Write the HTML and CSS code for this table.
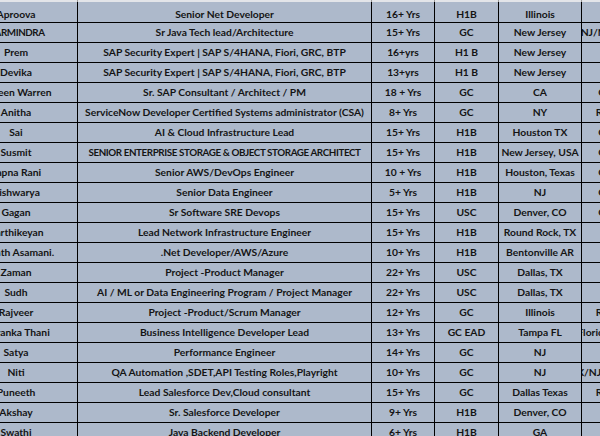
FILE: index.html
```html
<!DOCTYPE html>
<html lang="en">
<head>
<meta charset="utf-8">
<title>Candidates</title>
<link rel="stylesheet" href="styles.css">
</head>
<body>
<div class="sheet">
  <div class="row strip"><div></div><div></div><div></div><div></div><div></div><div></div></div>
  <div class="row first"><div>Aproova</div><div>Senior Net Developer</div><div>16+ Yrs</div><div>H1B</div><div>Illinois</div><div></div></div>
  <div class="row"><div class="caps">HARMINDRA</div><div>Sr Java Tech lead/Architecture</div><div>15+ Yrs</div><div>GC</div><div>New Jersey</div><div>NJ/NY/CT/PA</div></div>
  <div class="row"><div>Prem</div><div>SAP Security Expert | SAP S/4HANA, Fiori, GRC, BTP</div><div>16+yrs</div><div>H1 B</div><div>New Jersey</div><div></div></div>
  <div class="row"><div>Devika</div><div>SAP Security Expert | SAP S/4HANA, Fiori, GRC, BTP</div><div>13+yrs</div><div>H1 B</div><div>New Jersey</div><div></div></div>
  <div class="row"><div>Noreen Warren</div><div>Sr. SAP Consultant / Architect / PM</div><div>18 + Yrs</div><div>GC</div><div>CA</div><div>Onsite</div></div>
  <div class="row"><div>Anitha</div><div>ServiceNow Developer Certified Systems administrator (CSA)</div><div>8+ Yrs</div><div>GC</div><div>NY</div><div>Remote</div></div>
  <div class="row"><div>Sai</div><div>AI &amp; Cloud Infrastructure Lead</div><div>15+ Yrs</div><div>H1B</div><div>Houston TX</div><div>Onsite</div></div>
  <div class="row"><div>Susmit</div><div class="caps">SENIOR ENTERPRISE STORAGE &amp; OBJECT STORAGE ARCHITECT</div><div>15+ Yrs</div><div>H1B</div><div>New Jersey, USA</div><div>Onsite</div></div>
  <div class="row"><div>Sapna Rani</div><div>Senior AWS/DevOps Engineer</div><div>10 + Yrs</div><div>H1B</div><div>Houston, Texas</div><div>Onsite</div></div>
  <div class="row"><div>Aishwarya</div><div>Senior Data Engineer</div><div>5+ Yrs</div><div>H1B</div><div>NJ</div><div>Onsite</div></div>
  <div class="row"><div>Gagan</div><div>Sr Software SRE Devops</div><div>15+ Yrs</div><div>USC</div><div>Denver, CO</div><div>Onsite</div></div>
  <div class="row"><div>Karthikeyan</div><div>Lead Network Infrastructure Engineer</div><div>15+ Yrs</div><div>H1B</div><div>Round Rock, TX</div><div></div></div>
  <div class="row"><div>Srinath Asamani.</div><div>.Net Developer/AWS/Azure</div><div>10+ Yrs</div><div>H1B</div><div>Bentonville AR</div><div></div></div>
  <div class="row"><div>Zaman</div><div>Project -Product Manager</div><div>22+ Yrs</div><div>USC</div><div>Dallas, TX</div><div></div></div>
  <div class="row"><div>Sudh</div><div>AI / ML or Data Engineering Program / Project Manager</div><div>22+ Yrs</div><div>USC</div><div>Dallas, TX</div><div></div></div>
  <div class="row"><div>Rajveer</div><div>Project -Product/Scrum Manager</div><div>12+ Yrs</div><div>GC</div><div>Illinois</div><div>Remote</div></div>
  <div class="row"><div>Priyanka Thani</div><div>Business Intelligence Developer Lead</div><div>13+ Yrs</div><div>GC EAD</div><div>Tampa FL</div><div>Florida/Georgia</div></div>
  <div class="row"><div>Satya</div><div>Performance Engineer</div><div>14+ Yrs</div><div>GC</div><div>NJ</div><div></div></div>
  <div class="row"><div>Niti</div><div>QA Automation ,SDET,API Testing Roles,Playright</div><div>10+ Yrs</div><div>GC</div><div>NJ</div><div>TX/NJ/NY/PA/DE</div></div>
  <div class="row"><div>Puneeth</div><div>Lead Salesforce Dev,Cloud consultant</div><div>15+ Yrs</div><div>GC</div><div>Dallas Texas</div><div>Remote</div></div>
  <div class="row"><div>Akshay</div><div>Sr. Salesforce Developer</div><div>9+ Yrs</div><div>H1B</div><div>Denver, CO</div><div></div></div>
  <div class="row"><div>Swathi</div><div>Java Backend Developer</div><div>6+ Yrs</div><div>H1B</div><div>GA</div><div></div></div>
</div>
</body>
</html>
```
FILE: styles.css
```css
html, body {
  margin: 0;
  padding: 0;
  background: #ffffff;
  overflow: hidden;
}

.sheet {
  margin-left: -45px;
  width: 691px;
  font-family: "Lato", "Liberation Sans", sans-serif;
  font-weight: 700;
  font-size: 10.3px;
  color: #141414;
}

.row {
  display: grid;
  grid-template-columns: 123px 294px 63px 64px 83px 64px;
  height: 20px;
}

.row > div {
  box-sizing: border-box;
  background: #adb9cb;
  border-right: 1px solid #000;
  border-bottom: 1px solid #000;
  text-align: center;
  white-space: nowrap;
  overflow: hidden;
  line-height: 19px;
  display: flex;
  justify-content: center;
}

.row > .caps {
  font-size: 9.8px;
  letter-spacing: -0.4px;
}

.row.first {
  height: 21px;
}

.row.first > div {
  padding-top: 4px;
  line-height: 17px;
}

.row.strip {
  height: 2px;
}

.row.strip > div {
  background: #e3e5e9;
  border-right: 1px solid #9a9a9a;
  border-bottom: 0;
}
```
